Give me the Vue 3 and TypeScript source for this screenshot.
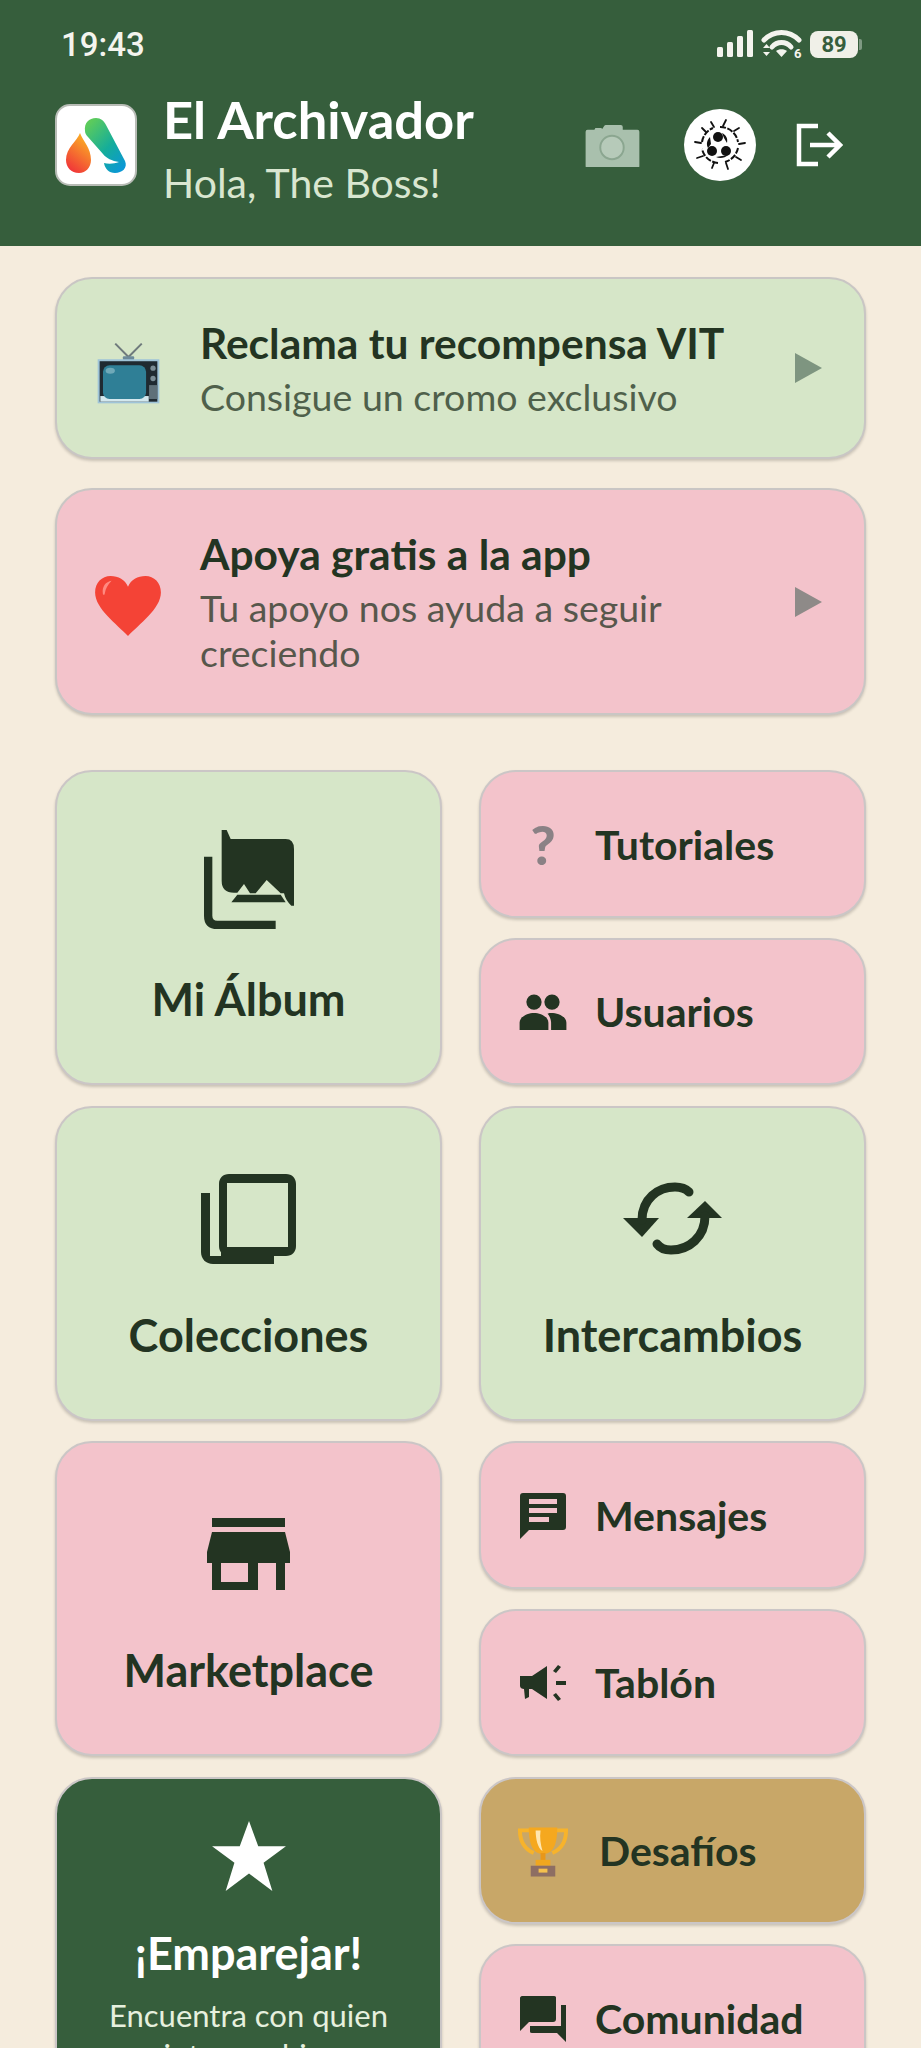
<script setup lang="ts">
const userName = "The Boss";
const batteryLevel = 89;
</script>

<template>
  <div class="page">
    <header class="header">
      <div class="status-bar">
        <span class="clock">19:43</span>
        <div class="status-icons">
          <svg width="38" height="28" viewBox="0 0 38 28" fill="#f4f4ee">
            <rect x="1" y="17" width="6" height="10" rx="1.500" />
            <rect x="11" y="12" width="6" height="15" rx="1.500" />
            <rect x="21" y="6" width="6" height="21" rx="1.500" />
            <rect x="31" y="0" width="6" height="27" rx="1.500" />
          </svg>
          <svg width="42" height="34" viewBox="0 0 42 34" fill="none" stroke="#f4f4ee" stroke-linecap="round">
            <path d="M3 13C13 3 28 3 38 13" stroke-width="5" />
            <path d="M11 20C16 14 25 14 30 20" stroke-width="5" />
            <path d="M15 24l5.500 6 5.500-6c-3-2.500-8-2.500-11 0z" fill="#f4f4ee" stroke="none" />
            <path d="M2 21l3.500-4 3.500 4zM2 25l3.500 4 3.500-4z" fill="#f4f4ee" stroke="none" />
            <text x="33" y="31" class="wifi-six" fill="#f4f4ee" stroke="none">6</text>
          </svg>
          <div class="battery">
            <span class="battery-level">{{ batteryLevel }}</span>
            <span class="battery-tip"></span>
          </div>
        </div>
      </div>

      <div class="app-bar">
        <div class="logo">
          <svg width="78" height="78" viewBox="1 1 78 78">
            <defs>
              <linearGradient id="dropGrad" x1="0.7" y1="0" x2="0.2" y2="1">
                <stop offset="0" stop-color="#fbb423" />
                <stop offset="1" stop-color="#f0303a" />
              </linearGradient>
              <linearGradient id="swooshGrad" x1="0.1" y1="0.1" x2="0.8" y2="1">
                <stop offset="0" stop-color="#5ccb5c" />
                <stop offset="0.55" stop-color="#15ad9a" />
                <stop offset="1" stop-color="#0b98d4" />
              </linearGradient>
            </defs>
            <path d="M24 28C27 36 35 43 35 55C35 62 30 68 23 68C15 68 10 62 10 55C10 43 21 36 24 28Z" fill="url(#dropGrad)" />
            <path d="M29 26C28 18 33 13 40 13C45 13 48 16 50 20L69 56C72 63 66 68 59 68C53 68 49 64 48 58C52 59 58 59 63 57C56 56 50 53 47 49L32 32C30 30 29 28 29 26Z" fill="url(#swooshGrad)" />
          </svg>
        </div>
        <div class="app-title">
          <div class="app-name">El Archivador</div>
          <div class="app-greeting">Hola, {{ userName }}!</div>
        </div>
        <div class="app-actions">
          <svg class="camera" width="56" height="43" viewBox="0 0 56 44">
            <path d="M1 8a2 2 0 0 1 2-2h7l1-2h6l1 1h0l2-3a2 2 0 0 1 2-1h15a2 2 0 0 1 2 2v3h15a2 2 0 0 1 2 2v35a2 2 0 0 1-2 2H3a2 2 0 0 1-2-2z" fill="#a9c0ad" />
            <circle cx="28" cy="24" r="12" fill="#b6cab9" stroke="#8ba690" stroke-width="2" />
          </svg>
          <div class="avatar">
            <svg width="54" height="54" viewBox="0 0 54 54" fill="#111">
              <circle cx="25" cy="19" r="5" />
              <circle cx="19" cy="33" r="5" />
              <circle cx="33" cy="33" r="5" />
              <path d="M29 15c4 2 6 5 5 10l-3-5zM15 30c-2-4-1-8 2-11l1 7zM35 37c-3 3-8 4-12 2l6-1z" />
              <path d="M27 9a18 18 0 0 1 18 15M45 30a18 18 0 0 1-13 14M25 45A18 18 0 0 1 9 31M9 24A18 18 0 0 1 20 10" fill="none" stroke="#111" stroke-width="2" stroke-dasharray="6 1.500" />
              <path d="M30 8l3-6M41 13l5-3M46 26l6-1M43 39l5 3M33 45l2 6M21 45l-2 5M10 38l-6 2M8 25l-6-1M13 14l-4-4M21 9l-3-5" fill="none" stroke="#111" stroke-width="1.800" stroke-linecap="round" />
            </svg>
          </div>
          <svg width="48" height="44" viewBox="0 0 48 44" fill="none" stroke="#fff" stroke-width="4.500">
            <path d="M23 3H4v38h19" />
            <path d="M15 22h29M33 10l12 12-12 12" />
          </svg>
        </div>
      </div>
    </header>

    <main class="content">
      <a class="banner green">
        <span class="banner-icon tv-icon">
          <svg width="63" height="61" viewBox="30 36 190 184">
            <path d="M125 78L85 38M125 78L165 38" stroke="#6f7a7c" stroke-width="6" fill="none" />
            <rect x="108" y="76" width="34" height="11" rx="3" fill="#6d8a99" />
            <rect x="32" y="85" width="186" height="133" fill="#9fc4d8" />
            <rect x="38" y="91" width="174" height="122" fill="#1f2a31" />
            <rect x="40" y="196" width="146" height="17" fill="#d3e8ee" />
            <rect x="48" y="103" width="130" height="102" rx="20" fill="#2f7f96" />
            <ellipse cx="70" cy="120" rx="14" ry="9" fill="#6fa9b8" />
            <circle cx="199" cy="112" r="8" fill="#7b8d96" />
            <circle cx="199" cy="143" r="8" fill="#7b8d96" />
            <rect x="187" y="163" width="25" height="42" fill="#5f7079" />
          </svg>
        </span>
        <div class="banner-text">
          <div class="banner-title">Reclama tu recompensa VIT</div>
          <div class="banner-sub">Consigue un cromo exclusivo</div>
        </div>
        <svg class="banner-arrow" width="27" height="30" viewBox="0 0 27 30"><path d="M0 0l27 15L0 30z" fill="#7e9580" /></svg>
      </a>

      <a class="banner pink">
        <span class="banner-icon heart-icon">
          <svg width="68" height="60" viewBox="0 0 70 62">
            <path d="M35 62C24 50 1 34 1 17C1 7 8 0 17 0C25 0 32 4 35 11C38 4 45 0 53 0C62 0 69 7 69 17C69 34 46 50 35 62Z" fill="#f44336" />
            <path d="M9 18C8 11 12 6 18 5C14 9 12 13 11 18C11 20 9 20 9 18Z" fill="#ff8a80" />
          </svg>
        </span>
        <div class="banner-text">
          <div class="banner-title">Apoya gratis a la app</div>
          <div class="banner-sub">Tu apoyo nos ayuda a seguir creciendo</div>
        </div>
        <svg class="banner-arrow" width="27" height="30" viewBox="0 0 27 30"><path d="M0 0l27 15L0 30z" fill="#8e8a88" /></svg>
      </a>

      <div class="menu-grid">
        <a class="tile large green">
          <span class="icon-box">
            <svg class="album-icon" width="90" height="99" viewBox="40 28 270 297" fill="#233422">
              <path d="M40 108H65V285Q65 300 80 300H255V325H80Q40 325 40 285Z" />
              <path d="M93 28H108L120 55H285Q310 55 310 85V255H302Q285 240 280 218H270L228 178L195 218H178L160 190L140 216H130Q93 216 93 180Z" />
              <path d="M140 222H270L285 245H122Z" />
            </svg>
          </span>
          <span class="tile-label">Mi Álbum</span>
        </a>
        <div class="tile-stack">
          <a class="tile small pink">
            <span class="small-icon"><span class="question">?</span></span>
            <span class="tile-label">Tutoriales</span>
          </a>
          <a class="tile small pink">
            <span class="small-icon">
              <svg width="50" height="36" viewBox="0 0 52 40" fill="#233422">
                <circle cx="16" cy="9" r="8.500" />
                <circle cx="36" cy="9" r="8.500" />
                <path d="M0 40v-8c0-7 9-11 16-11 7 0 16 4 16 11v8z" />
                <path d="M35 21c8 0 17 4 17 11v8H35v-8c0-4-2-8-4-10 1-1 3-1 4-1z" />
              </svg>
            </span>
            <span class="tile-label">Usuarios</span>
          </a>
        </div>

        <a class="tile large green">
          <span class="icon-box">
            <svg width="95" height="90" viewBox="0 0 95 90" fill="#233422">
              <path fill-rule="evenodd" d="M28 0h57c6 0 10 4 10 10v62c0 6-4 10-10 10H28c-6 0-10-4-10-10V10C18 4 22 0 28 0zM26 9v64h61V9z" />
              <path d="M0 19h9v63h64v8H12C5 90 0 85 0 78z" />
              <rect x="20" y="74" width="53" height="12" />
            </svg>
          </span>
          <span class="tile-label">Colecciones</span>
        </a>
        <a class="tile large green">
          <span class="icon-box">
            <svg width="99" height="73" viewBox="0 0 99 73" fill="#233422">
              <path d="M0 36h36L19 55z" />
              <path d="M64 36h35L82 19z" />
              <path d="M19 38C19 17 35 5 52 5C58 5 63 7 66 10" fill="none" stroke="#233422" stroke-width="9" stroke-linecap="round" />
              <path d="M82 34C82 55 66 68 48 68C42 68 37 66 34 62" fill="none" stroke="#233422" stroke-width="9" stroke-linecap="round" />
            </svg>
          </span>
          <span class="tile-label">Intercambios</span>
        </a>

        <a class="tile large pink">
          <span class="icon-box">
            <svg width="83" height="72" viewBox="0 0 83 72" fill="#233422">
              <rect x="5" y="0" width="73" height="9" />
              <path d="M5 14H78L83 34V45H0V34Z" />
              <path fill-rule="evenodd" d="M5 45H51V72H5ZM14 45V64H41V45Z" />
              <rect x="69" y="45" width="9" height="27" />
            </svg>
          </span>
          <span class="tile-label">Marketplace</span>
        </a>
        <div class="tile-stack">
          <a class="tile small pink">
            <span class="small-icon">
              <svg width="46" height="46" viewBox="0 0 46 46" fill="#233422">
                <path fill-rule="evenodd" d="M3 0h40c2 0 3 1 3 3v31c0 2-1 3-3 3H9l-9 9V3C0 1 1 0 3 0zM9 6v5h28V6zM9 15v5h28v-5zM9 24v5h20v-5z" />
              </svg>
            </span>
            <span class="tile-label">Mensajes</span>
          </a>
          <a class="tile small pink">
            <span class="small-icon">
              <svg width="46" height="36" viewBox="0 0 46 36" fill="#233422">
                <path d="M0 11h12L27 1v33L12 24H9v8l-4 2-1-10c-2 0-4-1-4-3z" />
                <path d="M33 6l5-6 3 2-5 6zM36 16h10v4H36zM33 30l3-2 5 6-3 2z" />
              </svg>
            </span>
            <span class="tile-label">Tablón</span>
          </a>
        </div>

        <a class="tile large match">
          <svg class="star" width="76" height="70" viewBox="0 0 76 72" fill="#fff">
            <path d="M38 0l9.500 26H76L53 43l9 29-24-18-24 18 9-29L0 26h28.500z" />
          </svg>
          <span class="match-title">¡Emparejar!</span>
          <span class="match-sub">Encuentra con quien intercambiar</span>
        </a>
        <div class="tile-stack">
          <a class="tile small gold">
            <span class="small-icon">
              <svg width="53" height="51" viewBox="0 0 53 51">
                <path d="M13 4H3C3 15 8 23 17 27M40 4h10c0 11-5 19-14 23" fill="none" stroke="#f7b32b" stroke-width="4" />
                <path d="M12 1h29c0 15-3 27-14.500 27S12 16 12 1z" fill="#f5a81f" />
                <path d="M19 4h5c-1 7 0 14 2 21-5-3-7-13-7-21z" fill="#ffe6b0" />
                <rect x="24" y="27" width="5" height="8" fill="#e8971a" />
                <rect x="19" y="34" width="15" height="6" fill="#f0a71f" />
                <rect x="14" y="40" width="25" height="11" fill="#8d6e63" />
                <rect x="22" y="43" width="9" height="4" fill="#f5c04d" />
              </svg>
            </span>
            <span class="tile-label gold-label">Desafíos</span>
          </a>
          <a class="tile small pink">
            <span class="small-icon">
              <svg width="46" height="46" viewBox="0 0 46 46" fill="#233422">
                <path d="M2 0h32c2 0 2 1 2 2v21c0 2-1 3-3 3H9l-9 9V2C0 1 1 0 2 0z" />
                <path d="M41 9h5v37l-9-9H12c-2 0-2-1-2-2v-5h31z" />
              </svg>
            </span>
            <span class="tile-label">Comunidad</span>
          </a>
        </div>
      </div>
    </main>
  </div>
</template>

<style>
html,
body {
  margin: 0;
  background: #f5ecdd;
}
</style>

<style scoped>
.page {
  width: 921px;
  height: 2048px;
  overflow: hidden;
  background: #f5ecdd;
  font-family: Lato, "Liberation Sans", sans-serif;
  color: #233422;
}

.header {
  height: 246px;
  box-sizing: border-box;
  background: #365e3c;
  padding: 0 55px;
  color: #fff;
}

.status-bar {
  height: 92px;
  display: flex;
  align-items: center;
  justify-content: space-between;
  padding: 0 4px 4px 6px;
  box-sizing: border-box;
}

.clock {
  font-family: Roboto, sans-serif;
  font-size: 33px;
  font-weight: 500;
  color: #f4f4ee;
}

.status-icons {
  display: flex;
  align-items: center;
  gap: 7px;
}

.wifi-six {
  font-family: Roboto, sans-serif;
  font-size: 13px;
  font-weight: 700;
}

.battery {
  display: flex;
  align-items: center;
  gap: 1px;
}

.battery-level {
  width: 48px;
  height: 27px;
  border-radius: 8px;
  background: #f0f0e8;
  color: #365e3c;
  font-family: Roboto, sans-serif;
  font-size: 22px;
  font-weight: 700;
  line-height: 27px;
  text-align: center;
}

.battery-tip {
  width: 3px;
  height: 11px;
  border-radius: 0 2px 2px 0;
  background: #7f9a83;
}

.app-bar {
  height: 82px;
  margin-top: 12px;
  display: flex;
  align-items: center;
}

.logo {
  width: 82px;
  height: 82px;
  box-sizing: border-box;
  border-radius: 15px;
  border: 2px solid #b8bcb6;
  background: #fff;
  display: flex;
  align-items: center;
  justify-content: center;
}

.app-title {
  margin-left: 26px;
  margin-top: 11px;
  flex: 1;
}

.app-name {
  font-size: 52.500px;
  font-weight: 700;
  line-height: 64px;
}

.app-greeting {
  font-size: 41px;
  line-height: 64px;
  color: #d9e6d0;
}

.app-actions {
  display: flex;
  align-items: center;
  margin-right: 23px;
}

.camera {
  margin-right: 44px;
}

.avatar {
  width: 72px;
  height: 72px;
  border-radius: 50%;
  background: #fff;
  display: flex;
  align-items: center;
  justify-content: center;
  margin-right: 39px;
}

.content {
  padding: 31px 55px 0;
}

.banner {
  display: flex;
  align-items: center;
  box-sizing: border-box;
  border-radius: 37px;
  border: 2px solid #c9c6c4;
  box-shadow: 0 2px 3px rgba(0, 0, 0, 0.18);
  padding: 38px 42px 38px 36px;
  margin-bottom: 29px;
}

.banner-icon {
  flex: none;
  width: 70px;
  margin-right: 37px;
  display: flex;
  justify-content: center;
}

.tv-icon {
  margin-top: 11px;
}

.heart-icon {
  margin-top: 8px;
}

.banner-text {
  flex: 1;
  min-width: 0;
}

.banner-title {
  font-size: 42.500px;
  font-weight: 700;
  line-height: 52px;
}

.banner-sub {
  font-size: 37.500px;
  line-height: 45px;
  opacity: 0.75;
  margin-top: 5px;
}

.banner-arrow {
  flex: none;
  margin-left: 16px;
}

.green {
  background: #d6e6c8;
}

.pink {
  background: #f3c3cb;
}

.gold {
  background: #c8a768;
}

.menu-grid {
  margin-top: 55px;
  display: grid;
  grid-template-columns: 387px 387px;
  justify-content: space-between;
  grid-auto-rows: 315px;
  row-gap: 20.500px;
}

.tile {
  display: flex;
  box-sizing: border-box;
  border: 2px solid #cbc6c6;
  border-radius: 37px;
  box-shadow: 0 2px 3px rgba(0, 0, 0, 0.18);
}

.tile.large {
  flex-direction: column;
  align-items: center;
  padding-top: 55px;
}

.icon-box {
  height: 112px;
  flex: none;
  display: flex;
  align-items: center;
  justify-content: center;
  margin-bottom: 33px;
}

.album-icon {
  margin-bottom: 8px;
}

.tile-label {
  font-size: 45px;
  font-weight: 700;
  line-height: 54px;
}

.tile-stack {
  display: flex;
  flex-direction: column;
  gap: 20px;
  height: 315px;
}

.tile.small {
  flex: 1;
  align-items: center;
  padding: 2px 0 0 36px;
}

.tile.small .tile-label {
  font-size: 41px;
}

.small-icon {
  width: 52px;
  flex: none;
  display: flex;
  justify-content: center;
  margin-right: 26px;
}

.question {
  font-size: 54px;
  font-weight: 900;
  color: #8a8185;
  line-height: 52px;
}

.gold-label {
  margin-left: 4px;
}

.tile.match {
  background: #365e3c;
  height: 460px;
  padding-top: 42px;
  color: #fff;
}

.star {
  flex: none;
  margin-bottom: 35px;
}

.match-title {
  font-size: 45px;
  font-weight: 700;
  line-height: 54px;
}

.match-sub {
  font-size: 31px;
  line-height: 40px;
  margin-top: 15px;
  width: 290px;
  text-align: center;
  color: #e6f0de;
}
</style>
